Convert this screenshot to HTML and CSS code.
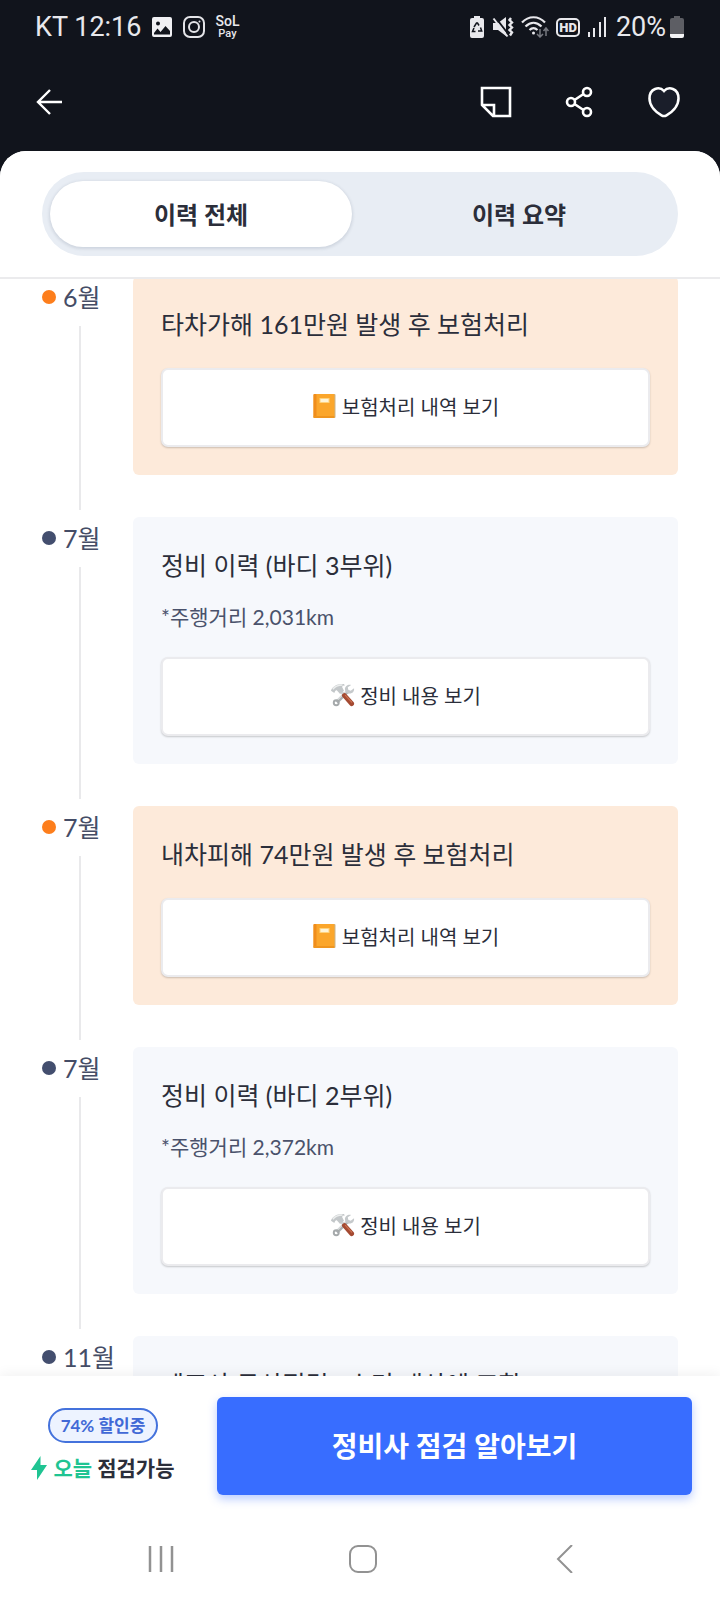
FILE: index.html
```html
<!DOCTYPE html>
<html lang="ko">
<head>
    <meta charset="UTF-8">
    <meta name="viewport" content="width=device-width, initial-scale=1.0">
    <title>차량 이력</title>
    <link rel="stylesheet" href="styles.css">
</head>
<body>
    <!-- Shared icons -->
    <svg class="sprite" aria-hidden="true">
        <symbol id="icon-book" viewBox="0 0 24 26">
            <rect x="2" y="1" width="21" height="24" rx="1" fill="#c9b48c"/>
            <rect x="1" y="1" width="21" height="24" rx="1" fill="#fba62b"/>
            <rect x="1" y="1" width="3" height="24" rx="1" fill="#f08d1c"/>
            <rect x="1" y="23" width="21" height="2" rx="1" fill="#ef951f"/>
            <rect x="7" y="5" width="10" height="5" fill="#ffd27c"/>
            <rect x="8" y="6" width="8" height="3" fill="#fff4d8"/>
        </symbol>
        <symbol id="icon-tools" viewBox="0 0 26 26">
            <path d="M7 20.5 18.5 9" stroke="#adb1b3" stroke-width="3.6"/>
            <path d="M7.5 18.5 17.5 8.500" stroke="#e0e3e4" stroke-width="1.2"/>
            <circle cx="6.500" cy="21" r="2.600" fill="none" stroke="#a5a9ab" stroke-width="2"/>
            <path d="M22 2.500c-3-1-6.500 1-6.500 4.500 0 3 2.500 5 5 4.500 3 0 5-2.500 4.500-5.500L21.500 8.500 19 7.500 18.500 5z" fill="#c5c9cb"/>
            <path d="m12 10 11.500 11.500" stroke="#cfd2d3" stroke-width="3"/>
            <path d="m15 13.500 7.500 8.500" stroke="#a44a32" stroke-width="5" stroke-linecap="round"/>
            <path d="m16 13.500 6.500 7" stroke="#cf7352" stroke-width="1.200" stroke-linecap="round"/>
            <path d="M1 8.500C2.500 4 7 1 14.500 1.500l1 1.500c-3 .2-3 1-2.500 2.500l1.500 3-4 3.500-3-3.500c-1.500-1-2 0-3 2.500z" fill="#c3c7c9"/>
            <path d="M3 7C5 4 8.500 2.500 13 2.500" fill="none" stroke="#eceeee" stroke-width="1.500"/>
        </symbol>
    </svg>

    <div class="app">
        <header class="top">
            <div class="status-bar">
                <div class="status-left">
                    <span class="status-text">KT 12:16</span>
                    <svg width="22" height="22" viewBox="0 0 22 22">
                        <path fill="#f0f0f3" fill-rule="evenodd" d="M3 1h16a2 2 0 0 1 2 2v16a2 2 0 0 1-2 2H3a2 2 0 0 1-2-2V3a2 2 0 0 1 2-2zm0 17.500h16V15l-4.500-5-5 6-3-3.500L3 17zM7 5.500a2 2 0 1 0 0 4 2 2 0 0 0 0-4z"/>
                    </svg>
                    <svg width="22" height="22" viewBox="0 0 22 22" fill="none" stroke="#e4e4e8" stroke-width="2">
                        <rect x="1" y="1" width="20" height="20" rx="6"/>
                        <circle cx="11" cy="11" r="5"/>
                        <circle cx="16.500" cy="5.500" r="1" fill="#e4e4e8" stroke="none"/>
                    </svg>
                    <span class="sol-pay"><span class="sol">SoL</span><span>Pay</span></span>
                </div>
                <div class="status-right">
                    <svg width="16" height="22" viewBox="0 0 16 22">
                        <path fill="#e8e8ec" d="M5 0h6v2h2a2 2 0 0 1 2 2v16a2 2 0 0 1-2 2H3a2 2 0 0 1-2-2V4a2 2 0 0 1 2-2h2z"/>
                        <path fill="none" stroke="#12151d" stroke-width="1.500" d="M5 11l2.500-4h1L10 9.500M11.500 11.500l1.200 3.500H9M6.500 15.500H3.500l1.500-3.500"/>
                    </svg>
                    <svg width="22" height="22" viewBox="0 0 22 22" fill="none" stroke="#e8e8ec" stroke-width="2">
                        <path fill="#e8e8ec" stroke="none" d="M1 7h5l8-6v19l-8-6H1z"/>
                        <path d="m3 1 14 18" stroke="#12151d"/>
                        <path d="m1.500 2.500 14 18"/>
                        <path stroke-width="2.400" d="m19 2-1.500 2L20 6.500 17.500 9l2.500 2.500-2.500 2.500 2.500 2.500-2 3"/>
                    </svg>
                    <svg width="28" height="22" viewBox="0 0 28 22" fill="none" stroke="#e8e8ec" stroke-width="2.200">
                        <path d="M1 6.500C7.500-.5 17.500-.5 24 6.500M4.500 10.500c5-5 11-5 16 0M8.500 14c2.500-2.500 5.500-2.500 8 0"/>
                        <circle cx="12.500" cy="17" r="1.500" fill="#e8e8ec" stroke="none"/>
                        <path stroke="#777980" stroke-width="1.500" d="M19 13v8m-3-3 3 3 3-3M25 20v-8m-2.500 3 2.500-3 2.500 3"/>
                    </svg>
                    <span class="hd">HD</span>
                    <svg width="20" height="22" viewBox="0 0 20 22" stroke="#e8e8ec" stroke-width="2">
                        <path d="M2 16v5M7 12v9M13 6v15M18 1v20"/>
                    </svg>
                    <span class="status-text battery-text">20%</span>
                    <svg width="16" height="22" viewBox="0 0 16 22">
                        <path fill="#5d5e64" d="M5 0h6v2h2a2 2 0 0 1 2 2v14H1V4a2 2 0 0 1 2-2h2z"/>
                        <path fill="#f4f4f6" d="M1 18h14v2a2 2 0 0 1-2 2H3a2 2 0 0 1-2-2z"/>
                    </svg>
                </div>
            </div>
            <div class="app-bar">
                <button class="icon-btn" type="button" aria-label="뒤로">
                    <svg width="28" height="32" viewBox="0 0 28 32" fill="none" stroke="#fff" stroke-width="2.400">
                        <path d="M27 16H3M15 4 3 16l12 12"/>
                    </svg>
                </button>
                <div class="app-actions">
                    <button class="icon-btn" type="button" aria-label="메모">
                        <svg width="32" height="32" viewBox="0 0 32 32" fill="none" stroke="#fff" stroke-width="2.600">
                            <path d="M2 2h28v28H13L2 19zM2 19h12v11"/>
                        </svg>
                    </button>
                    <button class="icon-btn" type="button" aria-label="공유">
                        <svg width="32" height="32" viewBox="0 0 32 32" fill="none" stroke="#fff" stroke-width="2.600">
                            <circle cx="7" cy="16" r="4"/>
                            <circle cx="23" cy="6" r="4"/>
                            <circle cx="23" cy="26" r="4"/>
                            <path d="m10.500 14 9-6M10.500 18l9 6"/>
                        </svg>
                    </button>
                    <button class="icon-btn" type="button" aria-label="찜">
                        <svg width="32" height="32" viewBox="0 0 32 32" fill="#1a1e2a" stroke="#fff" stroke-width="2.600">
                            <path d="M16 5C11.500 0 1.500 2 1.500 12.500 1.500 20.500 8.500 26.500 13.500 29.300q2.500 1.400 5 0C23.500 26.500 30.500 20.500 30.500 12.500 30.500 2 20.500 0 16 5z"/>
                        </svg>
                    </button>
                </div>
            </div>
        </header>

        <div class="sheet">
            <div class="tabs-wrap">
                <div class="tabs" role="tablist">
                    <button class="tab active" type="button" role="tab" aria-selected="true">이력 전체</button>
                    <button class="tab" type="button" role="tab" aria-selected="false">이력 요약</button>
                </div>
            </div>

            <main class="scroll">
                <div class="timeline">
                    <section class="entry accident">
                        <div class="month"><span class="month-label">6월</span></div>
                        <div class="card">
                            <h2 class="card-title">타차가해 161만원 발생 후 보험처리</h2>
                            <button class="card-btn" type="button"><svg class="emoji"><use href="#icon-book"/></svg>보험처리 내역 보기</button>
                        </div>
                    </section>
                    <section class="entry">
                        <div class="month"><span class="month-label">7월</span></div>
                        <div class="card">
                            <h2 class="card-title">정비 이력 (바디 3부위)</h2>
                            <p class="mileage">*주행거리 2,031km</p>
                            <button class="card-btn" type="button"><svg class="emoji"><use href="#icon-tools"/></svg>정비 내용 보기</button>
                        </div>
                    </section>
                    <section class="entry accident">
                        <div class="month"><span class="month-label">7월</span></div>
                        <div class="card">
                            <h2 class="card-title">내차피해 74만원 발생 후 보험처리</h2>
                            <button class="card-btn" type="button"><svg class="emoji"><use href="#icon-book"/></svg>보험처리 내역 보기</button>
                        </div>
                    </section>
                    <section class="entry">
                        <div class="month"><span class="month-label">7월</span></div>
                        <div class="card">
                            <h2 class="card-title">정비 이력 (바디 2부위)</h2>
                            <p class="mileage">*주행거리 2,372km</p>
                            <button class="card-btn" type="button"><svg class="emoji"><use href="#icon-tools"/></svg>정비 내용 보기</button>
                        </div>
                    </section>
                    <section class="entry">
                        <div class="month"><span class="month-label">11월</span></div>
                        <div class="card">
                            <h2 class="card-title">제조사 무상점검 · 수리 대상에 포함</h2>
                        </div>
                    </section>
                </div>
            </main>

            <footer class="bottom">
                <div class="promo">
                    <span class="badge">74% 할인중</span>
                    <span class="today">
                        <svg width="16" height="24" viewBox="0 0 16 24" fill="#1fc492">
                            <path d="M9.500 0 0 14h6l0 10L16 9h-6.500z"/>
                        </svg>
                        <span><em>오늘</em> 점검가능</span>
                    </span>
                </div>
                <button class="cta" type="button">정비사 점검 알아보기</button>
            </footer>
        </div>

        <nav class="system-nav">
            <button class="icon-btn" type="button" aria-label="최근 앱">
                <svg width="28" height="28" viewBox="0 0 28 28" stroke="#929292" stroke-width="2.500">
                    <path d="M3 1v26M14 1v26M25 1v26"/>
                </svg>
            </button>
            <button class="icon-btn" type="button" aria-label="홈">
                <svg width="28" height="28" viewBox="0 0 28 28" fill="none" stroke="#929292" stroke-width="2">
                    <rect x="1" y="1" width="26" height="26" rx="8"/>
                </svg>
            </button>
            <button class="icon-btn" type="button" aria-label="뒤로가기">
                <svg width="18" height="28" viewBox="0 0 18 28" fill="none" stroke="#929292" stroke-width="2">
                    <path d="M16 0 2 14l14 14"/>
                </svg>
            </button>
        </nav>
    </div>
</body>
</html>
```
FILE: styles.css
```css
* {
    box-sizing: border-box;
}
body {
    margin: 0;
    font-family: Lato, "Noto Sans CJK KR", sans-serif;
    color: #2b2e3a;
    background: #fff;
}
button {
    margin: 0;
    padding: 0;
    border: 0;
    background: none;
    font-family: inherit;
    color: inherit;
    cursor: pointer;
}
svg {
    display: block;
    flex-shrink: 0;
}
.sprite {
    position: absolute;
    width: 0;
    height: 0;
}
.app {
    display: flex;
    flex-direction: column;
    height: 100vh;
    background: #11141c;
}

/* status bar */
.status-bar {
    display: flex;
    justify-content: space-between;
    align-items: center;
    height: 54px;
    padding: 0 35px;
    font-family: Roboto, sans-serif;
    color: #e8e8ec;
}
.status-left,
.status-right {
    display: flex;
    align-items: center;
}
.status-left {
    gap: 10px;
}
.status-right {
    gap: 7px;
}
.status-text {
    font-size: 27px;
    line-height: 30px;
}
.battery-text {
    margin: 0 -4px 0 2px;
}
.sol-pay {
    display: flex;
    flex-direction: column;
    align-items: center;
    font-size: 11px;
    line-height: 11px;
    font-weight: 500;
}
.sol {
    font-size: 14px;
    line-height: 13px;
}
.hd {
    padding: 0 1px;
    border: 2px solid #e8e8ec;
    border-radius: 5px;
    font-size: 13px;
    line-height: 15px;
    font-weight: 900;
}

/* app bar */
.app-bar {
    display: flex;
    justify-content: space-between;
    align-items: center;
    height: 97px;
    padding: 0 40px 2px 35px;
}
.app-actions {
    display: flex;
    gap: 52px;
}

/* sheet */
.sheet {
    display: flex;
    flex: 1;
    flex-direction: column;
    min-height: 0;
    border-radius: 26px 26px 0 0;
    background: #fff;
    overflow: hidden;
}
.tabs-wrap {
    position: relative;
    z-index: 1;
    padding: 21px 42px;
    border-bottom: 2px solid #ebebed;
    background: #fff;
}
.tabs {
    display: flex;
    height: 84px;
    padding: 9px 0;
    border-radius: 42px;
    background: #e8edf4;
}
.tab {
    flex: 1;
    margin: 0 8px;
    padding-bottom: 2px;
    border-radius: 33px;
    font-size: 24px;
    font-weight: 700;
}
.tab.active {
    background: #fff;
    box-shadow: 0 1px 3px 1px rgba(60, 70, 100, 0.14);
}

/* timeline */
.scroll {
    flex: 1;
    min-height: 0;
    margin-top: -3px;
    padding: 0 42px;
    overflow-y: auto;
    scrollbar-width: none;
}
.entry {
    display: flex;
}
.month {
    display: flex;
    flex-direction: column;
    width: 91px;
}
.month::after {
    content: "";
    flex: 1;
    width: 2px;
    margin: 8px 0 7px 37px;
    background: #e9e9eb;
}
.month-label {
    display: flex;
    align-items: center;
    gap: 7px;
    font-size: 25px;
    line-height: 42px;
    color: #454d66;
}
.month-label::before {
    content: "";
    width: 14px;
    height: 14px;
    border-radius: 50%;
    background: #434e6e;
}
.accident .month-label::before {
    background: #fd7e1c;
}
.card {
    flex: 1;
    margin-bottom: 42px;
    padding: 28px;
    border-radius: 6px;
    background: #f6f8fc;
}
.accident .card {
    background: #fdeada;
}
.card-title {
    margin: 0;
    font-size: 25px;
    line-height: 40px;
    font-weight: 400;
}
.mileage {
    margin: 14px 0 -2px;
    font-size: 21px;
    line-height: 36px;
    color: #4a526b;
}
.card-btn {
    display: flex;
    justify-content: center;
    align-items: center;
    gap: 5px;
    width: 100%;
    height: 79px;
    margin-top: 24px;
    padding-bottom: 3px;
    border: 2px solid #ebebee;
    border-radius: 7px;
    background: #fff;
    box-shadow: 0 1px 2px rgba(0, 0, 0, 0.2);
    font-size: 20px;
}
.emoji {
    width: 25px;
    height: 26px;
}

/* bottom bar */
.bottom {
    position: relative;
    display: flex;
    gap: 39px;
    padding: 21px 28px 23px;
    background: #fff;
    box-shadow: 0 -2px 12px rgba(0, 0, 0, 0.06);
}
.promo {
    display: flex;
    flex-direction: column;
    align-items: center;
    width: 150px;
    padding-top: 11px;
    white-space: nowrap;
}
.badge {
    padding: 0 11px;
    border: 2px solid #4472dc;
    border-radius: 18px;
    background: #edf3ff;
    font-size: 17px;
    line-height: 31px;
    font-weight: 700;
    color: #4169d6;
}
.today {
    display: flex;
    align-items: center;
    gap: 6px;
    margin-top: 8px;
    font-size: 21px;
    line-height: 34px;
    font-weight: 700;
}
.today em {
    font-style: normal;
    color: #1fc492;
}
.cta {
    flex: 1;
    height: 98px;
    padding-bottom: 2px;
    border-radius: 6px;
    background: #386dff;
    box-shadow: 0 4px 10px rgba(56, 109, 255, 0.35);
    font-size: 28px;
    font-weight: 700;
    color: #fff;
}

/* system navigation */
.system-nav {
    display: grid;
    grid-template-columns: repeat(3, 1fr);
    height: 82px;
    padding: 0 54px 0 60px;
    background: #fff;
}
.system-nav .icon-btn {
    display: flex;
    justify-content: center;
    align-items: center;
}
```
